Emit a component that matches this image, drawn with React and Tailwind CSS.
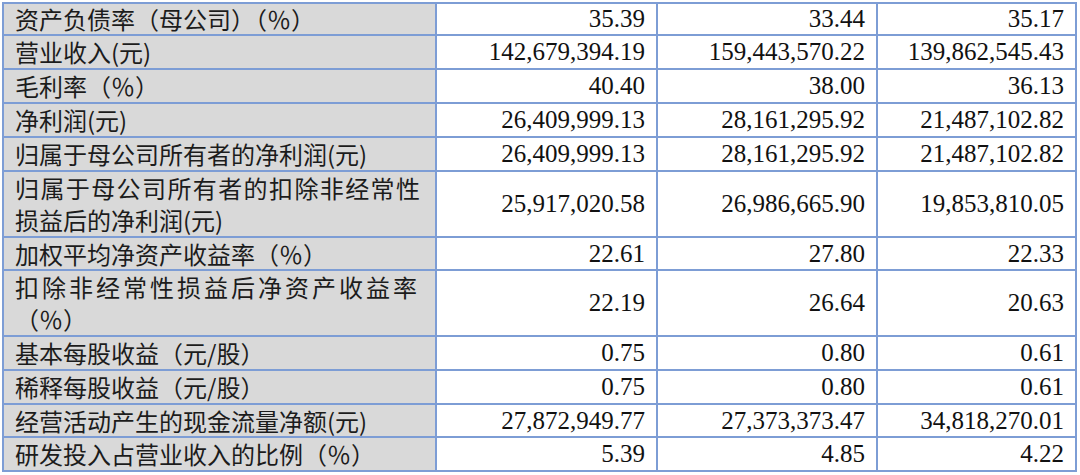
const rows = [
  { label: ['资产负债率（母公司）（％）'], h: 'h-[30px]', v: ['35.39', '33.44', '35.17'] },
  { label: ['营业收入(元)'], h: 'h-[32px]', v: ['142,679,394.19', '159,443,570.22', '139,862,545.43'] },
  { label: ['毛利率（％）'], h: 'h-[32px]', v: ['40.40', '38.00', '36.13'] },
  { label: ['净利润(元)'], h: 'h-[32px]', v: ['26,409,999.13', '28,161,295.92', '21,487,102.82'] },
  { label: ['归属于母公司所有者的净利润(元)'], h: 'h-[32px]', v: ['26,409,999.13', '28,161,295.92', '21,487,102.82'] },
  {
    label: ['归属于母公司所有者的扣除非经常性', '损益后的净利润(元)'],
    track: 'tracking-[1.4px]',
    h: 'h-[64px]',
    v: ['25,917,020.58', '26,986,665.90', '19,853,810.05'],
  },
  { label: ['加权平均净资产收益率（％）'], h: 'h-[31px]', v: ['22.61', '27.80', '22.33'] },
  {
    label: ['扣除非经常性损益后净资产收益率', '（％）'],
    track: 'tracking-[3px]',
    h: 'h-[64px]',
    v: ['22.19', '26.64', '20.63'],
  },
  { label: ['基本每股收益（元/股）'], h: 'h-[32px]', v: ['0.75', '0.80', '0.61'] },
  { label: ['稀释每股收益（元/股）'], h: 'h-[32px]', v: ['0.75', '0.80', '0.61'] },
  { label: ['经营活动产生的现金流量净额(元)'], h: 'h-[31px]', v: ['27,872,949.77', '27,373,373.47', '34,818,270.01'] },
  { label: ['研发投入占营业收入的比例（％）'], h: 'h-[32px]', v: ['5.39', '4.85', '4.22'] },
]

function LabelCell({ row }) {
  const double = row.label.length > 1
  return (
    <div
      className={`${row.h} bg-[#d9d9d9] pl-[11px] flex flex-col justify-center text-[24px] text-[#1c1c1c] whitespace-nowrap ${double ? 'leading-[32px]' : 'leading-[30px]'}`}
      style={{ fontFamily: '"Noto Sans CJK SC", "Noto Sans", sans-serif' }}
    >
      {row.label.map((line, i) => (
        <span key={i} className={i === 0 && double ? row.track : ''}>
          {line}
        </span>
      ))}
    </div>
  )
}

function ValueCell({ h, children }) {
  return (
    <div
      className={`${h} bg-white pr-[11px] flex items-center justify-end text-[25px] leading-[30px] text-[#111] whitespace-nowrap`}
      style={{ fontFamily: '"Liberation Serif", "Times New Roman", serif' }}
    >
      {children}
    </div>
  )
}

export default function App() {
  return (
    <div className="w-[1080px] h-[475px] bg-white pt-[2px] pl-[2px]">
      <div className="w-[1075px] grid grid-cols-[431px_219px_218px_197px] gap-[2px] p-[2px] bg-[#7d9dd5]">
        {rows.map((row, i) => (
          <div key={i} className="contents">
            <LabelCell row={row} />
            {row.v.map((val, j) => (
              <ValueCell key={j} h={row.h}>
                {val}
              </ValueCell>
            ))}
          </div>
        ))}
      </div>
    </div>
  )
}
